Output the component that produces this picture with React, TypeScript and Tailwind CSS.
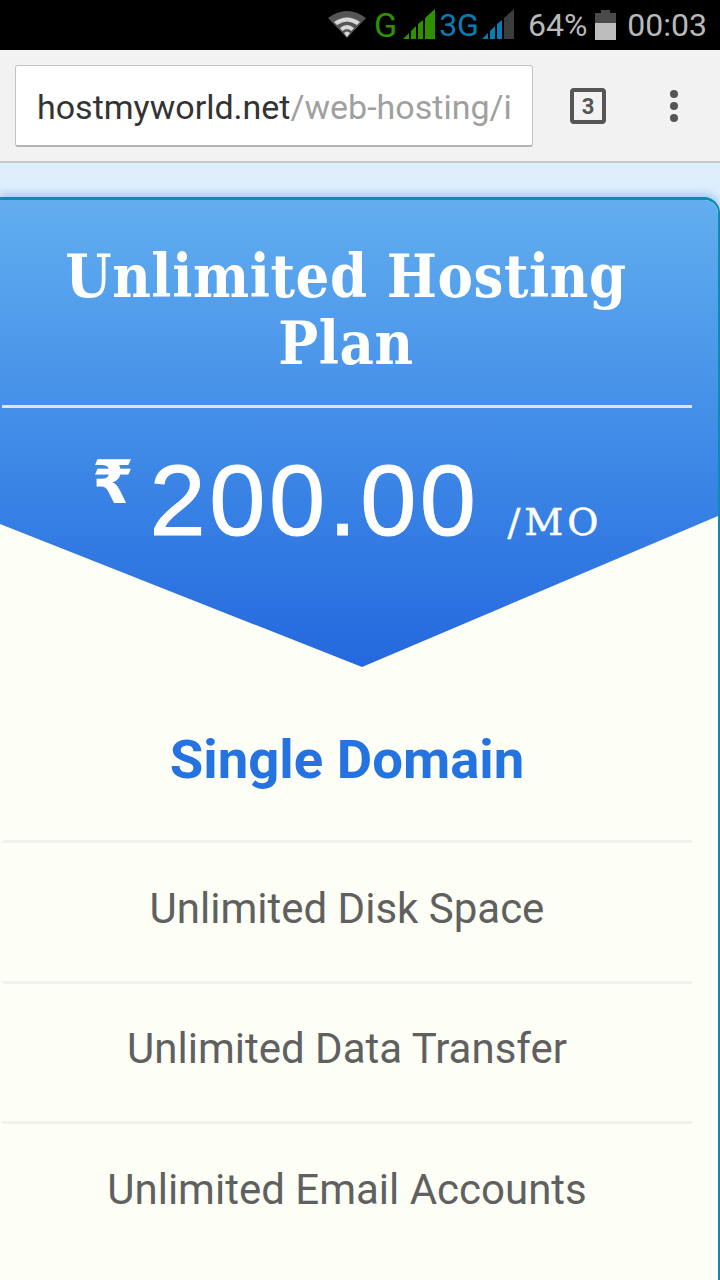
export default function App() {
  const rows = ["Unlimited Disk Space", "Unlimited Data Transfer", "Unlimited Email Accounts"];
  return (
    <div className="h-[1280px] w-[720px] overflow-hidden bg-[#dfeefc] font-['Roboto',sans-serif]">
      <div className="flex h-[50px] items-center justify-end bg-black pr-[13px] text-[32px] leading-none text-[#b9b9b9]">
        <svg width="40" height="30" viewBox="0 0 40 30" className="mr-[6px] mb-[3px]">
          <path d="M0 9 Q19 -5 38 9 L19 29 Z" fill="#555" />
          <path d="M6 13 Q19 4 32 13 L29 16 Q19 9 9 16 Z M12 19 Q19 13 26 19 L23.500 22 Q19 18 14.500 22 Z" fill="#d8d8d8" />
          <path d="M16 24 Q19 21 22 24 L19 28 Z" fill="#d8d8d8" />
        </svg>
        <span className="text-[34px] text-[#2e9200]">G</span>
        <svg width="32" height="32" viewBox="0 0 32 32" className="ml-[6px]">
          <path d="M0 30 L6 30 L6 24 Z M8 30 L13 30 L13 17 L8 22 Z M15 30 L20 30 L20 11 L15 15 Z M22 30 L32 30 L32 0 L22 9 Z" fill="#2e9200" />
        </svg>
        <span className="ml-[4px] text-[#0a7cb5]">3G</span>
        <svg width="32" height="32" viewBox="0 0 32 32" className="ml-[3px]">
          <path d="M0 30 L6 30 L6 24 Z M8 30 L13 30 L13 17 L8 22 Z M15 30 L20 30 L20 11 L15 15 Z" fill="#0a7cb5" />
          <path d="M22 30 L32 30 L32 0 L22 9 Z" fill="#3c3c3c" />
        </svg>
        <span className="ml-[14px]">64%</span>
        <svg width="22" height="32" viewBox="0 0 22 32" className="ml-[8px]">
          <path d="M0 4 L6 4 L6 1 L15 1 L15 4 L21 4 L21 14 L0 14 Z" fill="#4a4a4a" />
          <rect x="0" y="14" width="21" height="17" fill="#bdbdbd" />
        </svg>
        <span className="ml-[10px]">00:03</span>
      </div>
      <div className="flex h-[113px] items-start border-b-2 border-[#c9c9c9] bg-[#f2f2f2] pl-[15px] pt-[15px]">
        <div className="flex h-[82px] w-[518px] items-center overflow-hidden rounded-[3px] border border-[#c4c4c4] border-b-2 border-b-[#b5b5b5] bg-white pl-[21px] pt-[4px] text-[34px] whitespace-nowrap">
          <span className="text-[#333]">hostmyworld.net</span>
          <span className="text-[#a0a0a0]">/web-hosting/i</span>
        </div>
        <div className="ml-[37px] mt-[23px] flex h-[36px] w-[36px] items-center justify-center rounded-[4px] border-[4px] border-[#555] text-[22px] font-bold text-[#555]">3</div>
        <div className="ml-[64px] mt-[25px] flex flex-col gap-[4px]">
          <div className="h-[8px] w-[8px] rounded-full bg-[#555]" />
          <div className="h-[8px] w-[8px] rounded-full bg-[#555]" />
          <div className="h-[8px] w-[8px] rounded-full bg-[#555]" />
        </div>
      </div>
      <div className="mt-[34px] h-[1100px] overflow-hidden rounded-tr-[16px] border-t-[3px] border-r-[2px] border-[#0c8bb6] bg-[#fdfff6] shadow-[0_-3px_8px_rgba(120,185,240,0.7)]">
        <div className="h-[467px] bg-gradient-to-b from-[#62aeef] to-[#2468de] pr-[26px] text-center text-white [clip-path:polygon(0_324px,0_0,100%_0,100%_316px,362px_467px)]">
          <div className="pt-[43px] font-['DejaVu_Serif_Condensed','DejaVu_Serif',serif] text-[59px] font-bold leading-[67px] tracking-[0.6px]">
            Unlimited Hosting<br />Plan
          </div>
          <div className="ml-[2px] mt-[28px] h-[3px] w-[690px] bg-[#dbe7f8]" />
          <div className="relative mt-[42px] flex items-baseline justify-center pl-[56px] font-['Liberation_Sans',sans-serif] text-[101px] leading-[100px]">
            <span className="absolute left-[92px] top-[-3px] font-['DejaVu_Sans',sans-serif] text-[60px] font-bold leading-[70px]">₹</span>
            <span className="ml-[4px] tracking-[3.500px] [-webkit-text-stroke:1px_white]">200.00</span>
            <span className="ml-[28px] font-['DejaVu_Serif',serif] text-[38px] leading-none tracking-[4px] [-webkit-text-stroke:0.5px_white]">/MO</span>
          </div>
        </div>
        <div className="w-[692px]">
          <div className="ml-[2px] border-b-[3px] border-[#f1f2ee] pb-[50px] pt-[61px] text-center text-[54.500px] font-bold leading-[62px] text-[#2473e0]">
            Single Domain
          </div>
          {rows.map((r, i) => (
            <div key={r} className={i < 2 ? "ml-[2px] flex h-[140.500px] items-center justify-center border-b-[3px] border-[#f1f2ee] pb-[7px] text-[42px] text-[#606060]" : "ml-[2px] flex h-[140.500px] items-center justify-center pb-[10px] text-[42px] text-[#606060]"}>
              {r}
            </div>
          ))}
        </div>
      </div>
    </div>
  );
}
